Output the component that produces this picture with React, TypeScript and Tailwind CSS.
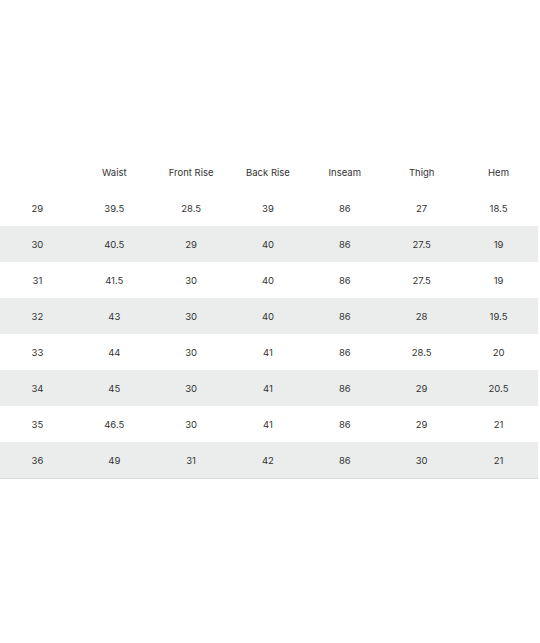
const headers = ["", "Waist", "Front Rise", "Back Rise", "Inseam", "Thigh", "Hem"];

const rows = [
  ["29", "39.5", "28.5", "39", "86", "27", "18.5"],
  ["30", "40.5", "29", "40", "86", "27.5", "19"],
  ["31", "41.5", "30", "40", "86", "27.5", "19"],
  ["32", "43", "30", "40", "86", "28", "19.5"],
  ["33", "44", "30", "41", "86", "28.5", "20"],
  ["34", "45", "30", "41", "86", "29", "20.5"],
  ["35", "46.5", "30", "41", "86", "29", "21"],
  ["36", "49", "31", "42", "86", "30", "21"],
];

export default function App() {
  return (
    <div className="min-h-[643px] w-[540px] bg-white pt-[154px] font-['Inter',sans-serif] text-[9.5px] text-[#333]">
      <table className="w-[538px] table-fixed border-b border-[#d9dbdb]">
        <thead>
          <tr className="h-[36px]">
            {headers.map((h, i) => (
              <th key={i} className="pr-[2px] pt-[2px] text-center font-normal">
                {h}
              </th>
            ))}
          </tr>
        </thead>
        <tbody>
          {rows.map((r, i) => (
            <tr key={i} className={i % 2 === 1 ? "h-[36px] bg-[#ebeded]" : "h-[36px]"}>
              {r.map((c, j) => (
                <td key={j} className="pr-[2px] pt-[2px] text-center">
                  {c}
                </td>
              ))}
            </tr>
          ))}
        </tbody>
      </table>
    </div>
  );
}
